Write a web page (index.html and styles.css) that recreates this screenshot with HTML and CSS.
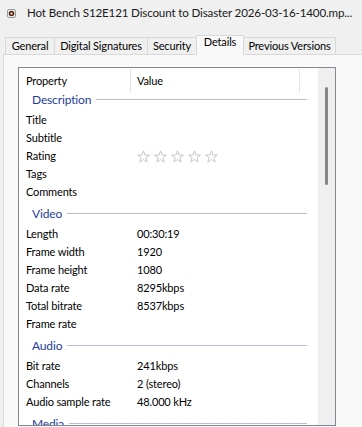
FILE: index.html
```html
<!DOCTYPE html>
<html>
<head>
<meta charset="utf-8">
<link rel="stylesheet" href="styles.css">
</head>
<body>
<div class="titlebar">
  <svg class="ficon" width="9" height="9" viewBox="0 0 9 9">
    <rect x="0.5" y="0.5" width="8" height="8" rx="1.5" fill="#f4f4f4" stroke="#9a9a9a"/>
    <circle cx="4.5" cy="4.5" r="2.8" fill="#3b2b25"/>
    <circle cx="4.5" cy="4.5" r="1.6" fill="#d8652c"/>
    <circle cx="4.5" cy="4.5" r="0.7" fill="#f2f2f2"/>
  </svg>
  <span class="title">Hot Bench S12E121 Discount to Disaster 2026-03-16-1400.mp...</span>
</div>
<div class="tabs">
  <div class="tab t-general">General</div>
  <div class="tab t-digital">Digital Signatures</div>
  <div class="tab t-security">Security</div>
  <div class="tab t-details sel">Details</div>
  <div class="tab t-previous">Previous Versions</div>
</div>
<div class="panel">
  <div class="list">
    <div class="content">
      <div class="header">
        <div class="hcell hname">Property</div>
        <div class="hcell hvalue">Value</div>
      </div>
      <div class="group first"><span class="gtext">Description</span><i class="gline"></i></div>
      <div class="row"><span class="name">Title</span><span class="val"></span></div>
      <div class="row"><span class="name">Subtitle</span><span class="val"></span></div>
      <div class="row"><span class="name">Rating</span>
        <span class="stars">
          <svg width="13" height="13" viewBox="0 0 13 13"><polygon points="6.5,0.8 7.97,4.98 12.4,5.08 8.88,7.77 10.15,12.02 6.5,9.5 2.85,12.02 4.12,7.77 0.6,5.08 5.03,4.98" fill="#fff" stroke="#c6c6c6" stroke-width="1" stroke-linejoin="miter"/></svg>
          <svg width="13" height="13" viewBox="0 0 13 13"><polygon points="6.5,0.8 7.97,4.98 12.4,5.08 8.88,7.77 10.15,12.02 6.5,9.5 2.85,12.02 4.12,7.77 0.6,5.08 5.03,4.98" fill="#fff" stroke="#c6c6c6" stroke-width="1" stroke-linejoin="miter"/></svg>
          <svg width="13" height="13" viewBox="0 0 13 13"><polygon points="6.5,0.8 7.97,4.98 12.4,5.08 8.88,7.77 10.15,12.02 6.5,9.5 2.85,12.02 4.12,7.77 0.6,5.08 5.03,4.98" fill="#fff" stroke="#c6c6c6" stroke-width="1" stroke-linejoin="miter"/></svg>
          <svg width="13" height="13" viewBox="0 0 13 13"><polygon points="6.5,0.8 7.97,4.98 12.4,5.08 8.88,7.77 10.15,12.02 6.5,9.5 2.85,12.02 4.12,7.77 0.6,5.08 5.03,4.98" fill="#fff" stroke="#c6c6c6" stroke-width="1" stroke-linejoin="miter"/></svg>
          <svg width="13" height="13" viewBox="0 0 13 13"><polygon points="6.5,0.8 7.97,4.98 12.4,5.08 8.88,7.77 10.15,12.02 6.5,9.5 2.85,12.02 4.12,7.77 0.6,5.08 5.03,4.98" fill="#fff" stroke="#c6c6c6" stroke-width="1" stroke-linejoin="miter"/></svg>
        </span>
      </div>
      <div class="row"><span class="name">Tags</span><span class="val"></span></div>
      <div class="row"><span class="name">Comments</span><span class="val"></span></div>
      <div class="group"><span class="gtext">Video</span><i class="gline"></i></div>
      <div class="row"><span class="name">Length</span><span class="val">00:30:19</span></div>
      <div class="row"><span class="name">Frame width</span><span class="val">1920</span></div>
      <div class="row"><span class="name">Frame height</span><span class="val">1080</span></div>
      <div class="row"><span class="name">Data rate</span><span class="val">8295kbps</span></div>
      <div class="row"><span class="name">Total bitrate</span><span class="val">8537kbps</span></div>
      <div class="row"><span class="name">Frame rate</span><span class="val"></span></div>
      <div class="group"><span class="gtext">Audio</span><i class="gline"></i></div>
      <div class="row"><span class="name">Bit rate</span><span class="val">241kbps</span></div>
      <div class="row"><span class="name">Channels</span><span class="val">2 (stereo)</span></div>
      <div class="row"><span class="name">Audio sample rate</span><span class="val">48.000 kHz</span></div>
      <div class="group"><span class="gtext">Media</span><i class="gline"></i></div>
    </div>
    <div class="vscroll"><div class="thumb"></div></div>
  </div>
</div>
</body>
</html>
```
FILE: styles.css
```css
html, body {
  margin: 0;
  height: 427px;
  overflow: hidden;
}
body {
  background: #f0f0f0;
  font-family: Lato, "Noto Sans", sans-serif;
  font-size: 11px;
  letter-spacing: -0.15px;
  color: #000;
}
.titlebar {
  height: 26px;
  display: flex;
  align-items: center;
  padding-left: 7px;
  gap: 11px;
}
.ficon { flex: none; }
.title {
  white-space: nowrap;
  font-size: 11.6px;
  line-height: 16px;
  color: #1a1a1a;
}
.tabs {
  display: flex;
  align-items: flex-end;
  margin-top: 9px;
  padding-left: 5px;
}
.tab {
  box-sizing: border-box;
  height: 17px;
  border: 1px solid #d9d9d9;
  border-bottom: none;
  background: #f0f0f0;
  line-height: 15px;
  text-align: center;
  white-space: nowrap;
  margin-left: -1px;
}
.t-general { width: 50px; margin-left: 0; }
.t-digital { width: 94px; }
.t-security { width: 50px; }
.t-details { width: 48px; }
.t-previous { width: 93px; }
.tab.sel {
  height: 20px;
  margin-bottom: -1px;
  background: #f9f9f9;
  line-height: 12px;
  position: relative;
  z-index: 1;
}
.panel {
  margin-left: 3px;
  border-left: 1px solid #d9d9d9;
  border-top: 1px solid #d9d9d9;
  background: #f9f9f9;
  padding: 12px 0 1px 14px;
}
.list {
  box-sizing: border-box;
  width: 318px;
  height: 359px;
  border: 1px solid #828790;
  background: #fff;
  display: flex;
  overflow: hidden;
}
.content {
  flex: 1;
  min-width: 0;
  overflow: hidden;
}
.vscroll {
  box-sizing: border-box;
  width: 17px;
  flex: none;
  background: #efefef;
  display: flex;
  justify-content: center;
  align-items: flex-start;
  padding-top: 19px;
}
.thumb {
  width: 3px;
  height: 98px;
  border-radius: 1.5px;
  background: #868686;
}
.header {
  display: flex;
  height: 25px;
}
.hcell {
  box-sizing: border-box;
  margin-top: 1px;
  height: 24px;
  border-right: 1px solid #e5e5e5;
  line-height: 18px;
  padding-top: 3px;
}
.hname { width: 112px; padding-left: 7px; }
.hvalue { width: 169px; padding-left: 6px; }
.group {
  display: flex;
  align-items: flex-start;
  height: 18px;
  padding: 6px 11px 0 13px;
  gap: 5px;
}
.group.first { padding-top: 0; }
.gtext {
  color: #1e3c9a;
  font-size: 12px;
  line-height: 14px;
}
.gline {
  flex: 1;
  height: 1px;
  margin-top: 6px;
  background: #b5bad9;
}
.row {
  display: flex;
  align-items: center;
  height: 18px;
  line-height: 18px;
}
.name {
  flex: none;
  box-sizing: border-box;
  width: 118px;
  padding-left: 7px;
  white-space: nowrap;
}
.val { white-space: nowrap; }
.stars {
  display: flex;
  gap: 4px;
  align-items: center;
  padding-top: 1px;
}
.stars svg { display: block; }
```
